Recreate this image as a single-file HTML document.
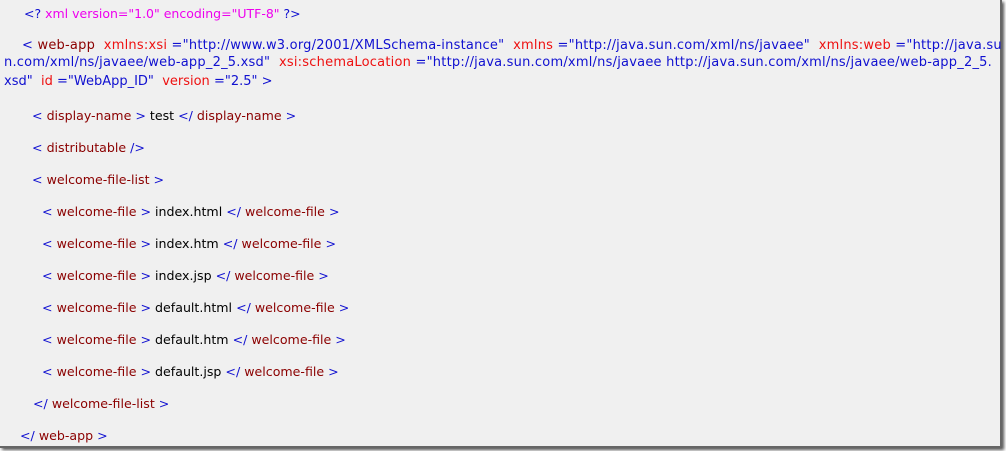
<!DOCTYPE html>
<html><head><meta charset="utf-8"><style>
html,body{margin:0;padding:0}
body{width:1006px;height:451px;position:relative;overflow:hidden;background:#fff}
.bg{position:absolute;left:0;top:0;width:1000px;height:446px;background:#f0f0f0;box-shadow:2px 2px 3px #555;border-right:2px solid #666;border-bottom:2px solid #666}
.l{position:absolute;white-space:pre;font-family:"DejaVu Sans","Liberation Sans",sans-serif;font-size:12.6px;line-height:16px;color:#000}
.w{font-size:13px;letter-spacing:0.22px}
.b{color:#1010d0}.e{color:#8b0000}.a{color:#ee1010}.m{color:#ee00ee}
</style></head><body><div class="bg"></div>
<div class="l" style="left:24px;top:6px;font-size:12.5px"><span class="b">&lt;? </span><span class="m">xml version="1.0" encoding="UTF-8"</span><span class="b"> ?&gt;</span></div>
<div class="l w" style="left:22px;top:38px"><span class="b">&lt; </span><span class="e">web-app</span>  <span class="a">xmlns:xsi</span><span class="b"> ="http://www.w3.org/2001/XMLSchema-instance"</span>  <span class="a">xmlns</span><span class="b"> ="http://java.sun.com/xml/ns/javaee"</span>  <span class="a">xmlns:web</span><span class="b"> ="http://java.su</span></div>
<div class="l w" style="left:4px;top:55px"><span class="b">n.com/xml/ns/javaee/web-app_2_5.xsd"</span>  <span class="a">xsi:schemaLocation</span><span class="b"> ="http://java.sun.com/xml/ns/javaee http://java.sun.com/xml/ns/javaee/web-app_2_5.</span></div>
<div class="l" style="left:4px;top:74px;font-size:13px"><span class="b">xsd"</span>  <span class="a">id</span><span class="b"> ="WebApp_ID"</span>  <span class="a">version</span><span class="b"> ="2.5" &gt;</span></div>
<div class="l" style="left:32px;top:108px"><span class="b">&lt; </span><span class="e">display-name</span><span class="b"> &gt; </span>test<span class="b"> &lt;/ </span><span class="e">display-name</span><span class="b"> &gt;</span></div>
<div class="l" style="left:32px;top:140px"><span class="b">&lt; </span><span class="e">distributable</span><span class="b"> /&gt;</span></div>
<div class="l" style="left:32px;top:172px"><span class="b">&lt; </span><span class="e">welcome-file-list</span><span class="b"> &gt;</span></div>
<div class="l" style="left:42px;top:204px"><span class="b">&lt; </span><span class="e">welcome-file</span><span class="b"> &gt; </span>index.html<span class="b"> &lt;/ </span><span class="e">welcome-file</span><span class="b"> &gt;</span></div>
<div class="l" style="left:42px;top:236px"><span class="b">&lt; </span><span class="e">welcome-file</span><span class="b"> &gt; </span>index.htm<span class="b"> &lt;/ </span><span class="e">welcome-file</span><span class="b"> &gt;</span></div>
<div class="l" style="left:42px;top:268px"><span class="b">&lt; </span><span class="e">welcome-file</span><span class="b"> &gt; </span>index.jsp<span class="b"> &lt;/ </span><span class="e">welcome-file</span><span class="b"> &gt;</span></div>
<div class="l" style="left:42px;top:300px"><span class="b">&lt; </span><span class="e">welcome-file</span><span class="b"> &gt; </span>default.html<span class="b"> &lt;/ </span><span class="e">welcome-file</span><span class="b"> &gt;</span></div>
<div class="l" style="left:42px;top:332px"><span class="b">&lt; </span><span class="e">welcome-file</span><span class="b"> &gt; </span>default.htm<span class="b"> &lt;/ </span><span class="e">welcome-file</span><span class="b"> &gt;</span></div>
<div class="l" style="left:42px;top:364px"><span class="b">&lt; </span><span class="e">welcome-file</span><span class="b"> &gt; </span>default.jsp<span class="b"> &lt;/ </span><span class="e">welcome-file</span><span class="b"> &gt;</span></div>
<div class="l" style="left:33px;top:396px"><span class="b">&lt;/ </span><span class="e">welcome-file-list</span><span class="b"> &gt;</span></div>
<div class="l" style="left:20px;top:428px"><span class="b">&lt;/ </span><span class="e">web-app</span><span class="b"> &gt;</span></div>
</body></html>
